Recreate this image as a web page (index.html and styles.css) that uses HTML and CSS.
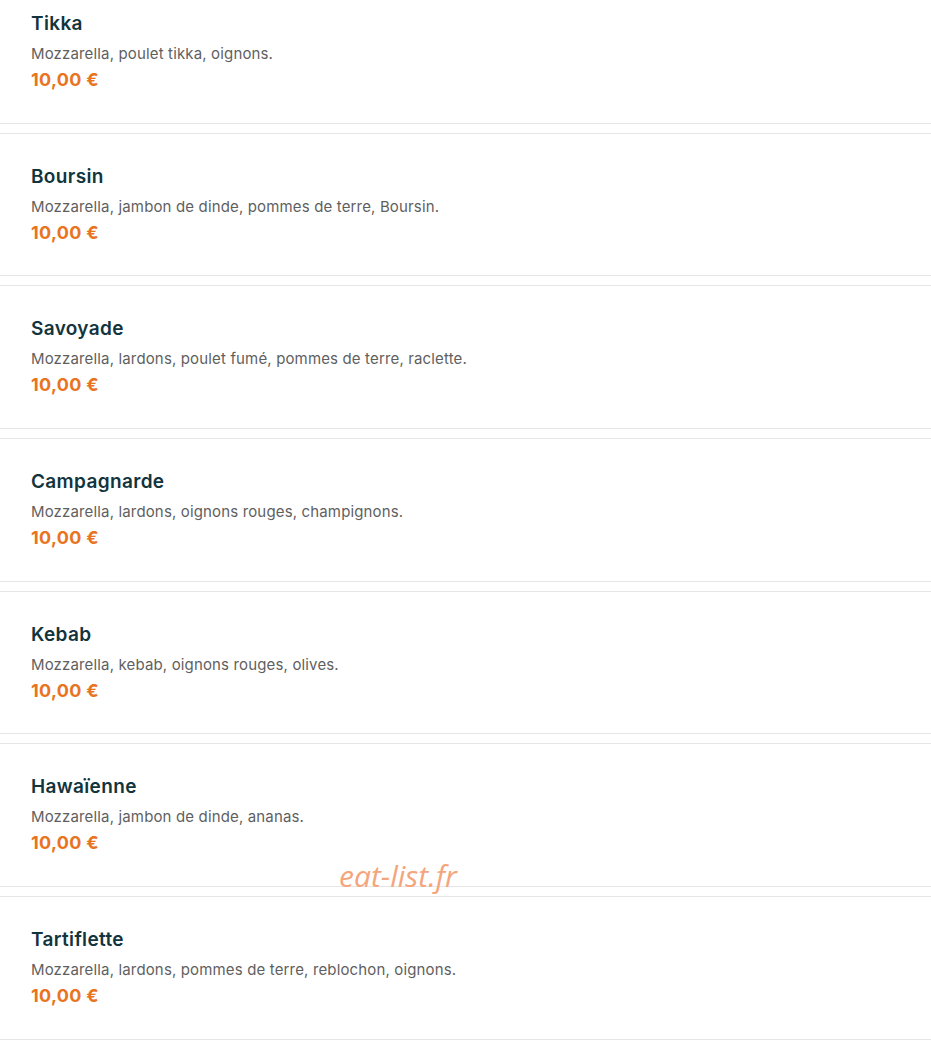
FILE: index.html
```html
<!DOCTYPE html>
<html lang="fr">
<head>
    <meta charset="UTF-8">
    <meta name="viewport" content="width=device-width, initial-scale=1.0">
    <title>Pizzas</title>
    <link rel="stylesheet" href="styles.css">
</head>
<body>
    <div class="menu-list">
        <div class="menu-item">
            <h3 class="item-name">Tikka</h3>
            <p class="item-desc">Mozzarella, poulet tikka, oignons.</p>
            <span class="item-price">10,00 €</span>
        </div>
        <div class="menu-item">
            <h3 class="item-name">Boursin</h3>
            <p class="item-desc">Mozzarella, jambon de dinde, pommes de terre, Boursin.</p>
            <span class="item-price">10,00 €</span>
        </div>
        <div class="menu-item">
            <h3 class="item-name">Savoyade</h3>
            <p class="item-desc">Mozzarella, lardons, poulet fumé, pommes de terre, raclette.</p>
            <span class="item-price">10,00 €</span>
        </div>
        <div class="menu-item">
            <h3 class="item-name">Campagnarde</h3>
            <p class="item-desc">Mozzarella, lardons, oignons rouges, champignons.</p>
            <span class="item-price">10,00 €</span>
        </div>
        <div class="menu-item">
            <h3 class="item-name">Kebab</h3>
            <p class="item-desc">Mozzarella, kebab, oignons rouges, olives.</p>
            <span class="item-price">10,00 €</span>
        </div>
        <div class="menu-item">
            <h3 class="item-name">Hawaïenne</h3>
            <p class="item-desc">Mozzarella, jambon de dinde, ananas.</p>
            <span class="item-price">10,00 €</span>
        </div>
        <div class="menu-item">
            <h3 class="item-name">Tartiflette</h3>
            <p class="item-desc">Mozzarella, lardons, pommes de terre, reblochon, oignons.</p>
            <span class="item-price">10,00 €</span>
        </div>
    </div>
    <div class="watermark">eat-list.fr</div>
</body>
</html>
```

FILE: styles.css
```css
body {
    margin: 0;
    background-color: #fff;
    font-family: Inter, "Open Sans", sans-serif;
    position: relative;
}

.menu-list {
    display: flex;
    flex-direction: column;
    gap: 9px;
    margin-top: -20px;
}

.menu-item {
    display: flex;
    flex-direction: column;
    align-items: flex-start;
    padding: 31px 31px 30.67px;
    border-top: 1px solid #e6e6e6;
    border-bottom: 1px solid #e6e6e6;
}

.item-name {
    margin: 0;
    font-size: 19px;
    line-height: 24px;
    font-weight: 600;
    letter-spacing: 0.35px;
    color: #12343d;
}

.item-desc {
    margin: 9px 0 0;
    font-size: 15px;
    line-height: 18px;
    letter-spacing: 0.15px;
    color: #5f5f5f;
}

.item-price {
    margin-top: 5px;
    font-size: 18px;
    line-height: 24px;
    font-weight: 700;
    letter-spacing: 0.3px;
    color: #e8741f;
}

.watermark {
    position: absolute;
    left: 339px;
    top: 855px;
    font-family: "Open Sans", sans-serif;
    font-style: italic;
    font-size: 30px;
    color: #f5a57c;
}
```
